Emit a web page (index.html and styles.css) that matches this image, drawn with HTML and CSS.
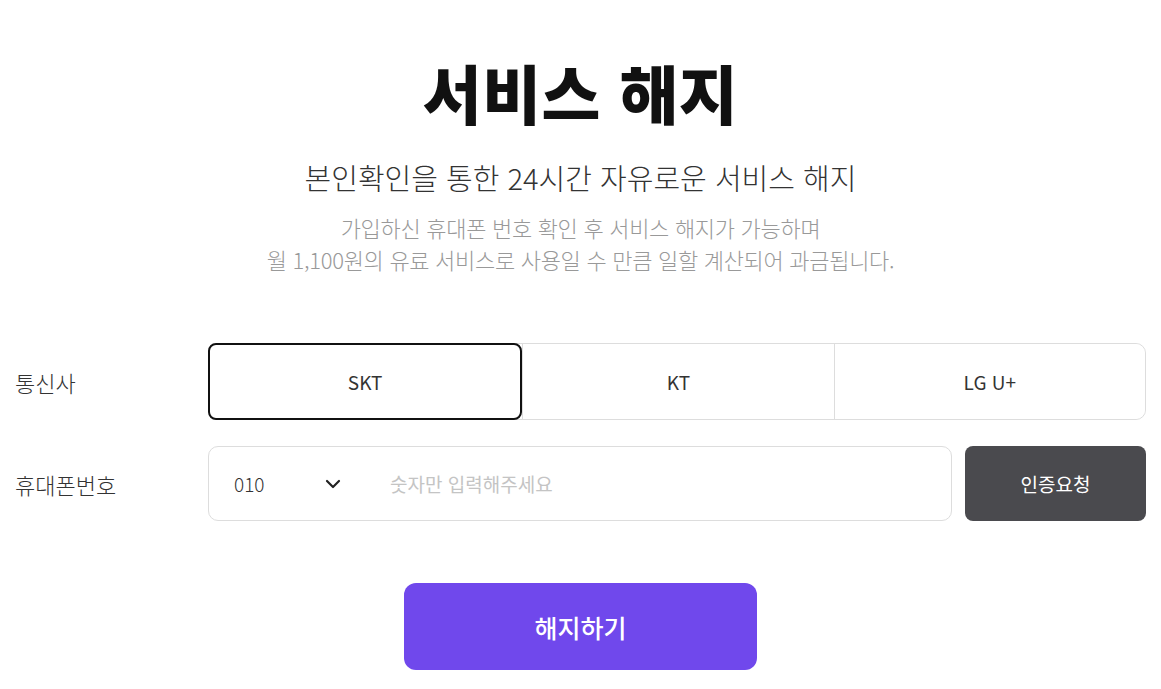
FILE: index.html
```html
<!DOCTYPE html>
<html lang="ko">
<head>
<meta charset="utf-8">
<title>서비스 해지</title>
<link rel="stylesheet" href="styles.css">
</head>
<body>
<main class="page">
  <h1 class="title">서비스 해지</h1>
  <p class="subtitle">본인확인을 통한 24시간 자유로운 서비스 해지</p>
  <p class="desc">가입하신 휴대폰 번호 확인 후 서비스 해지가 가능하며<br>월 1,100원의 유료 서비스로 사용일 수 만큼 일할 계산되어 과금됩니다.</p>

  <div class="form">
    <div class="row row-carrier">
      <div class="label">통신사</div>
      <div class="carriers">
        <button class="carrier active">SKT</button>
        <button class="carrier">KT</button>
        <button class="carrier">LG U+</button>
      </div>
    </div>
    <div class="row row-phone">
      <div class="label">휴대폰번호</div>
      <div class="phone">
        <div class="phone-box">
          <div class="prefix">
            <span class="prefix-num">010</span>
            <svg class="chev" width="16" height="10" viewBox="0 0 16 10"><path d="M2 2 L8 8 L14 2" fill="none" stroke="#222" stroke-width="2.2" stroke-linecap="round" stroke-linejoin="round"/></svg>
          </div>
          <span class="placeholder">숫자만 입력해주세요</span>
        </div>
        <button class="verify">인증요청</button>
      </div>
    </div>
  </div>

  <div class="submit-wrap">
    <button class="submit">해지하기</button>
  </div>
</main>
</body>
</html>
```

FILE: styles.css
```css
* { box-sizing: border-box; }
html, body { margin: 0; padding: 0; background: #fff; }
body {
  font-family: "Noto Sans CJK KR", "Noto Sans", sans-serif;
  color: #222;
}
.page {
  padding: 0 15px 0 15px;
}
.title {
  margin: 53px 0 0;
  text-align: center;
  font-size: 64px;
  line-height: 76px;
  font-weight: 900;
  color: #111;
  letter-spacing: 0.5px;
}
.subtitle {
  margin: 28px 0 0;
  text-align: center;
  font-size: 29px;
  line-height: 40px;
  font-weight: 300;
  color: #333;
  letter-spacing: 0;
}
.desc {
  margin: 14px 0 0;
  text-align: center;
  font-size: 22px;
  line-height: 32px;
  font-weight: 300;
  color: #999;
  letter-spacing: -0.3px;
}
.form {
  margin-top: 68px;
  display: flex;
  flex-direction: column;
  gap: 26px;
}
.row {
  display: flex;
  align-items: center;
}
.label {
  width: 193px;
  flex: none;
  font-size: 22px;
  font-weight: 300;
  color: #333;
}
.carriers {
  flex: 1;
  display: flex;
  height: 77px;
  border: 1px solid #ddd;
  border-radius: 10px;
}
.carrier {
  flex: 1;
  background: #fff;
  border: none;
  border-left: 1px solid #ddd;
  font-family: inherit;
  font-size: 19px;
  font-weight: 400;
  color: #333;
  border-radius: 0 10px 10px 0;
}
.carrier:nth-child(2) { border-radius: 0; }
.carrier.active {
  border: 2px solid #111;
  border-radius: 8px;
  margin: -1px 0 -1px -1px;
}
.phone {
  flex: 1;
  display: flex;
  gap: 13px;
  height: 75px;
}
.phone-box {
  flex: 1;
  display: flex;
  align-items: center;
  border: 1px solid #ddd;
  border-radius: 10px;
  padding-left: 25px;
}
.prefix {
  width: 156px;
  flex: none;
  display: flex;
  align-items: center;
  font-size: 19px;
  font-weight: 300;
  color: #333;
}
.prefix-num { width: 91px; }
.placeholder {
  font-size: 19px;
  color: #c4c4c4;
  font-weight: 400;
}
.verify {
  width: 181px;
  flex: none;
  border: none;
  background: #4a4a4e;
  color: #fff;
  border-radius: 8px;
  font-family: inherit;
  font-size: 19px;
}
.submit-wrap {
  margin-top: 62px;
  display: flex;
  justify-content: center;
}
.submit {
  width: 353px;
  height: 87px;
  border: none;
  border-radius: 12px;
  background: #7048ec;
  color: #fff;
  font-family: inherit;
  font-size: 25px;
  font-weight: 500;
}
```
